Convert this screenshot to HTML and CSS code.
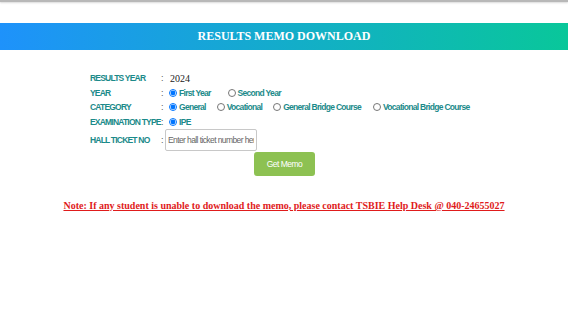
FILE: index.html
```html
<!DOCTYPE html>
<html lang="en">
<head>
    <meta charset="UTF-8">
    <meta name="viewport" content="width=device-width, initial-scale=1.0">
    <title>Results Memo Download</title>
    <link rel="stylesheet" href="styles.css">
</head>
<body>
    <div class="topline"></div>
    <div class="banner">RESULTS MEMO DOWNLOAD</div>

    <form class="memo-form" onsubmit="return false;">
        <div class="row">
            <span class="label">RESULTS YEAR</span>
            <span class="colon">:</span>
            <span class="year-value">2024</span>
        </div>
        <div class="row">
            <span class="label">YEAR</span>
            <span class="colon">:</span>
            <label class="opt"><input type="radio" name="year" checked>First Year</label>
            <label class="opt gap1"><input type="radio" name="year">Second Year</label>
        </div>
        <div class="row">
            <span class="label">CATEGORY</span>
            <span class="colon">:</span>
            <label class="opt"><input type="radio" name="cat" checked>General</label>
            <label class="opt gap2"><input type="radio" name="cat">Vocational</label>
            <label class="opt gap2"><input type="radio" name="cat">General Bridge Course</label>
            <label class="opt gap3"><input type="radio" name="cat">Vocational Bridge Course</label>
        </div>
        <div class="row">
            <span class="label">EXAMINATION TYPE</span>
            <span class="colon">:</span>
            <label class="opt"><input type="radio" name="exam" checked>IPE</label>
        </div>
        <div class="row ticket-row">
            <span class="label">HALL TICKET NO</span>
            <span class="colon">:</span>
            <input type="text" class="ticket-input" placeholder="Enter hall ticket number here">
        </div>
        <div class="btn-row">
            <button class="get-btn">Get Memo</button>
        </div>
    </form>

    <p class="note">Note: If any student is unable to download the memo, please contact TSBIE Help Desk @ 040-24655027</p>
</body>
</html>
```

FILE: styles.css
```css
body {
    margin: 0;
    padding: 0;
    font-family: "Liberation Sans", Arial, sans-serif;
    background: #fff;
}
.topline {
    height: 2px;
    background: #b8b8b8;
    box-shadow: 0 1px 2px #d8d8d8;
}
.banner {
    margin-top: 21px;
    height: 27px;
    line-height: 27px;
    text-align: center;
    color: #fff;
    font-family: "Liberation Serif", "Times New Roman", serif;
    font-weight: bold;
    font-size: 12px;
    background: linear-gradient(to right, #1e92fb, #09c79a);
}
.memo-form {
    margin: 21px 0 0 90px;
}
.row {
    display: flex;
    align-items: center;
    height: 14.5px;
}
.label {
    width: 71px;
    white-space: nowrap;
    color: #1b8a8a;
    font-weight: bold;
    font-size: 8.5px;
    letter-spacing: -0.8px;
}
.colon {
    width: 8px;
    color: #555;
    font-size: 9px;
}
.year-value {
    font-family: "Liberation Serif", "Times New Roman", serif;
    font-size: 10px;
    color: #222;
    margin-left: 1px;
}
.opt {
    display: flex;
    align-items: center;
    color: #1b8a8a;
    font-weight: bold;
    font-size: 8.5px;
    letter-spacing: -0.7px;
}
.opt input {
    width: 8px;
    height: 8px;
    margin: 0 2px 0 0;
}
.gap1 {
    margin-left: 17px;
}
.gap2 {
    margin-left: 11px;
}
.gap3 {
    margin-left: 12px;
}
.ticket-row {
    height: 24px;
    margin-top: -1px;
}
.ticket-input {
    width: 92px;
    height: 22px;
    box-sizing: border-box;
    border: 1px solid #c8c8c8;
    border-radius: 2px;
    padding: 0 2px;
    font-family: "Liberation Sans", Arial, sans-serif;
    font-size: 8.5px;
    letter-spacing: -0.6px;
    margin-left: -4px;
}
.ticket-input::placeholder {
    color: #666;
}
.btn-row {
    margin: 0 0 0 164px;
}
.get-btn {
    width: 61px;
    height: 24px;
    background: #8dc152;
    border: none;
    border-radius: 3px;
    color: #fff;
    font-family: "Liberation Sans", Arial, sans-serif;
    font-size: 8.5px;
    letter-spacing: -0.5px;
}
.note {
    margin: 24px 0 0 0;
    text-align: center;
    color: #e01b1b;
    font-family: "Liberation Serif", "Times New Roman", serif;
    font-weight: bold;
    font-size: 10px;
    text-decoration: underline;
}
```
